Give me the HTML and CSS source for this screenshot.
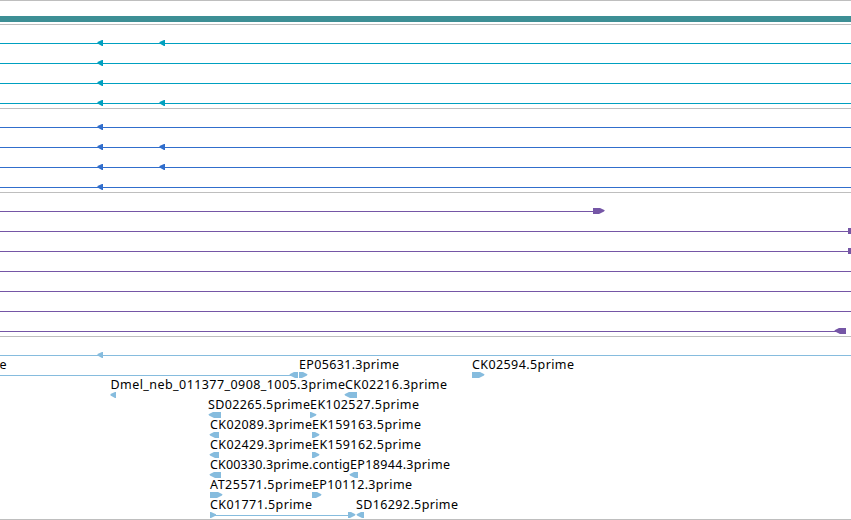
FILE: index.html
```
<!DOCTYPE html>
<html>
<head>
    <meta charset="utf-8" />
    <title>Genome browser</title>
    <link rel="stylesheet" href="styles.css">
</head>
<body>
    <div id="panel">
        <div class="contig"></div>

        <div class="section cyan">
            <svg class="track"><rect y="15" width="851" height="1"/><path d="M97.5 14V15.5L102 18H103V12H102ZM159.5 14V15.5L164 18H165V12H164Z"/></svg>
            <svg class="track"><rect y="15" width="851" height="1"/><path d="M97.5 14V15.5L102 18H103V12H102Z"/></svg>
            <svg class="track"><rect y="15" width="851" height="1"/><path d="M97.5 14V15.5L102 18H103V12H102Z"/></svg>
            <svg class="track"><rect y="15" width="851" height="1"/><path d="M97.5 14V15.5L102 18H103V12H102ZM159.5 14V15.5L164 18H165V12H164Z"/></svg>
        </div>

        <div class="section blue">
            <svg class="track"><rect y="15" width="851" height="1"/><path d="M97.5 14V15.5L102 18H103V12H102Z"/></svg>
            <svg class="track"><rect y="15" width="851" height="1"/><path d="M97.5 14V15.5L102 18H103V12H102ZM159.5 14V15.5L164 18H165V12H164Z"/></svg>
            <svg class="track"><rect y="15" width="851" height="1"/><path d="M97.5 14V15.5L102 18H103V12H102ZM159.5 14V15.5L164 18H165V12H164Z"/></svg>
            <svg class="track"><rect y="15" width="851" height="1"/><path d="M97.5 14V15.5L102 18H103V12H102Z"/></svg>
        </div>

        <div class="section purple">
            <svg class="track"><rect y="15" width="594" height="1"/><path d="M593 12H600L604.8 14.3 604 15.5 599 18H593Z"/></svg>
            <svg class="track"><rect y="15" width="851" height="1"/><rect x="848" y="12" width="3" height="6"/></svg>
            <svg class="track"><rect y="15" width="851" height="1"/><rect x="848" y="12" width="3" height="6"/></svg>
            <svg class="track"><rect y="15" width="851" height="1"/></svg>
            <svg class="track"><rect y="15" width="851" height="1"/></svg>
            <svg class="track"><rect y="15" width="851" height="1"/></svg>
            <svg class="track"><rect y="15" width="836" height="1"/><path d="M834.5 14.3 839 12H846V18H840L835 15.5Z"/></svg>
        </div>

        <div class="section est">
            <svg class="track"><rect y="15" width="851" height="1"/><path d="M97.5 14V15.5L102 18H103V12H102Z"/></svg>
            <svg class="track">
                <rect y="15" width="292" height="1"/>
                <path d="M289.5 14.3 294 12H298V18H295L290 15.5ZM299 12H303L307.5 14.3 307 15.5 302 18H299ZM472 12H480L484.5 14.3 484 15.5 479 18H472Z"/>
                <text x="-.5" y="9">e</text>
                <text x="299" y="9" textLength="100">EP05631.3prime</text>
                <text x="472" y="9" textLength="102">CK02594.5prime</text>
            </svg>
            <svg class="track">
                <path d="M110.5 14V15.5L115 18H116V12H115ZM344.5 14.3 349 12H357V18H350L345 15.5Z"/>
                <text x="110.5" y="9" textLength="234.5">Dmel_neb_011377_0908_1005.3prime</text>
                <text x="345" y="9" textLength="102">CK02216.3prime</text>
            </svg>
            <svg class="track">
                <path d="M208.5 14.3 213 12H221V18H214L209 15.5ZM310 12H311L316.5 14.3 316 15.5 311 18H310Z"/>
                <text x="208" y="9" textLength="102">SD02265.5prime</text>
                <text x="310" y="9" textLength="109">EK102527.5prime</text>
            </svg>
            <svg class="track">
                <path d="M209.5 14.3 214 12H219V18H215L210 15.5ZM312 12H315L319.5 14.3 319 15.5 314 18H312Z"/>
                <text x="210" y="9" textLength="102">CK02089.3prime</text>
                <text x="312" y="9" textLength="109">EK159163.5prime</text>
            </svg>
            <svg class="track">
                <path d="M209.5 14.3 214 12H219V18H215L210 15.5ZM312 12H315L319.5 14.3 319 15.5 314 18H312Z"/>
                <text x="210" y="9" textLength="102">CK02429.3prime</text>
                <text x="312" y="9" textLength="109">EK159162.5prime</text>
            </svg>
            <svg class="track">
                <path d="M209.5 14.3 214 12H221V18H215L210 15.5ZM349.5 14.3 354 12H358V18H355L350 15.5Z"/>
                <text x="210" y="9" textLength="140">CK00330.3prime.contig</text>
                <text x="350" y="9" textLength="100">EP18944.3prime</text>
            </svg>
            <svg class="track">
                <path d="M210 12H218L222.5 14.3 222 15.5 217 18H210ZM312 12H317L321.5 14.3 321 15.5 316 18H312Z"/>
                <text x="210" y="9" textLength="102">AT25571.5prime</text>
                <text x="312" y="9" textLength="100">EP10112.3prime</text>
            </svg>
            <svg class="track">
                <rect x="210" y="15" width="141" height="1"/>
                <path d="M210 12H211L216 14.3V15.5L211 18H210ZM348 12H351L355.5 14.3 355 15.5 350 18H348ZM356.5 14.3 361 12H364V18H362L357 15.5Z"/>
                <text x="210" y="9" textLength="102">CK01771.5prime</text>
                <text x="356" y="9" textLength="102">SD16292.5prime</text>
            </svg>
        </div>
    </div>
</body>
</html>
```
FILE: styles.css
```
body {
    margin: 0;
    background-color: #ffffff;
}
#panel {
    box-sizing: border-box;
    width: 851px;
    height: 520px;
    border-style: solid;
    border-color: #bebebe;
    border-width: 1px 0;
    overflow: hidden;
}
.contig {
    height: 6px;
    margin: 15px 0 2px 0;
    background-color: #3d8f95;
}
.section {
    border-top: 1px solid #bebebe;
    padding-top: 3px;
}
.track {
    display: block;
    width: 851px;
    height: 20px;
    overflow: visible;
}
.track text {
    fill: #000000;
    font-family: "Noto Sans", "DejaVu Sans", sans-serif;
    font-size: 12.5px;
}
.cyan {
    fill: #00a0c0;
}
.blue {
    fill: #316ecc;
}
.purple {
    fill: #7556a6;
}
.est {
    fill: #86bcde;
}
```
